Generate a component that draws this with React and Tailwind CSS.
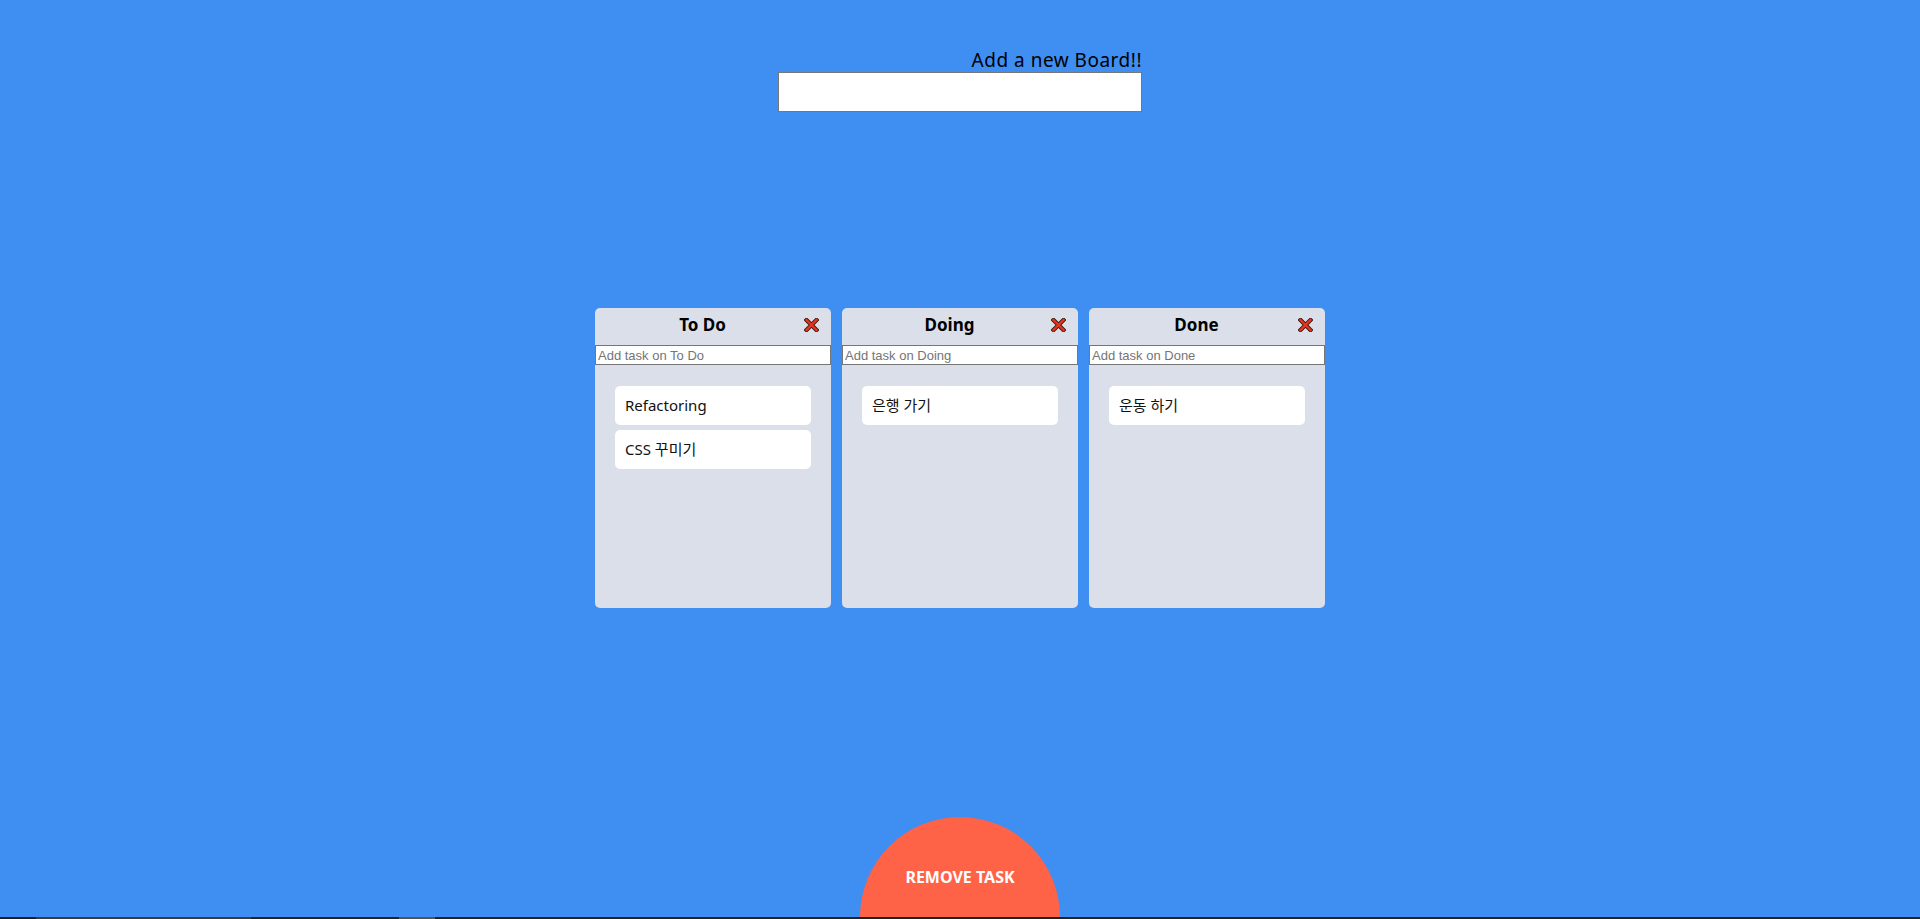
import { useState } from 'react';

const CrossIcon = () => (
  <svg width="15" height="14" viewBox="0 0 15 14">
    <path d="M2.5 2 L12.5 12 M12.5 2 L2.5 12" stroke="#3a1a14" strokeWidth="4.2" strokeLinecap="square" />
    <path d="M2.5 2 L12.5 12 M12.5 2 L2.5 12" stroke="#e8341c" strokeWidth="2.4" strokeLinecap="square" />
  </svg>
);

const Board = ({ title, tasks }) => (
  <div className="w-[236px] h-[300px] bg-[#dadfea] rounded-[5px] flex flex-col">
    <div className="h-[37px] flex items-center">
      <h2 className="flex-1 text-center pl-[6px] mb-[4px] text-[17px] font-bold text-black leading-none">{title}</h2>
      <button className="w-[15px] h-[14px] mr-[12px] mb-[3px] flex items-center justify-center">
        <CrossIcon />
      </button>
    </div>
    <input
      className="h-[20px] w-full bg-white border border-[#767676] px-[2px] text-[13px] text-black placeholder:text-[#757575] outline-none"
      style={{ fontFamily: '"Liberation Sans", Arial, sans-serif' }}
      placeholder={`Add task on ${title}`}
    />
    <div className="flex flex-col gap-[5px] pt-[21px] px-[20px]">
      {tasks.map((t) => (
        <div key={t} className="h-[39px] bg-white rounded-[5px] flex items-center px-[10px] text-[15px] text-[#111]">
          {t}
        </div>
      ))}
    </div>
  </div>
);

export default function App() {
  const [boards] = useState([
    { title: 'To Do', tasks: ['Refactoring', 'CSS 꾸미기'] },
    { title: 'Doing', tasks: ['은행 가기'] },
    { title: 'Done', tasks: ['운동 하기'] },
  ]);

  return (
    <div
      className="h-screen bg-[#3f8ef2] flex flex-col overflow-hidden relative"
      style={{ fontFamily: '"Noto Sans", "Noto Sans CJK KR", sans-serif' }}
    >
      <header className="h-[117px] flex justify-center pt-[49px]">
        <form className="w-[364px] flex flex-col items-end" onSubmit={(e) => e.preventDefault()}>
          <span className="text-[19px] leading-[23px] text-black tracking-[0.5px]">Add a new Board!!</span>
          <input className="w-full h-[40px] bg-white border border-[#767676] outline-none" />
        </form>
      </header>

      <main className="flex-1 flex items-center justify-center gap-[11px]">
        {boards.map((b) => (
          <Board key={b.title} title={b.title} tasks={b.tasks} />
        ))}
      </main>

      <footer className="h-[120px] flex justify-center pt-[18px]">
        <button className="w-[200px] h-[200px] shrink-0 rounded-full bg-[#ff6347] text-white font-bold text-[16px] flex justify-center pt-[48px]">
          REMOVE TASK
        </button>
      </footer>

      <div className="absolute bottom-0 left-0 right-0 h-[2px] flex bg-[#22231c]">
        <div className="w-[36px] bg-[#1b1f24]" />
        <div className="w-[215px] bg-[#3c3c3c]" />
        <div className="w-[148px] bg-[#22231c]" />
        <div className="w-[36px] bg-[#55554f]" />
      </div>
    </div>
  );
}
